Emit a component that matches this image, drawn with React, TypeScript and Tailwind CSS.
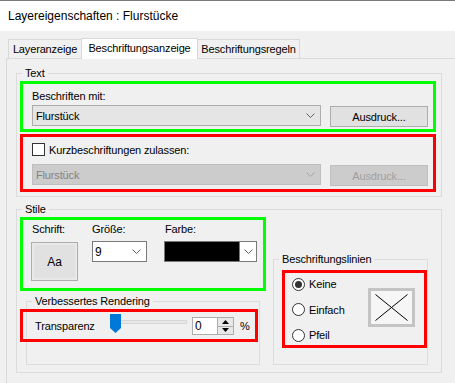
import React from "react";

const Chevron = ({ color = "#606060" }: { color?: string }) => (
  <svg width="9" height="5" viewBox="0 0 9 5" className="shrink-0">
    <path d="M0.5 0.5 L4.5 4.5 L8.5 0.5" fill="none" stroke={color} strokeWidth="1" />
  </svg>
);

function Group({
  label,
  className,
  children,
}: {
  label: string;
  className?: string;
  children?: React.ReactNode;
}) {
  return (
    <div className={`relative border border-[#dcdcdc] ${className ?? ""}`}>
      <span className="absolute left-[5px] -top-[8px] bg-[#f0f0f0] px-[3px] leading-[14px] whitespace-nowrap">
        {label}
      </span>
      {children}
    </div>
  );
}

function Radio({ label, checked }: { label: string; checked?: boolean }) {
  return (
    <div className="flex items-center h-[16px]">
      <div className="w-[13px] h-[13px] rounded-full border border-[#333333] bg-white flex items-center justify-center">
        {checked && <div className="w-[7px] h-[7px] rounded-full bg-[#333333]" />}
      </div>
      <span className="ml-[4px]">{label}</span>
    </div>
  );
}

export default function App() {
  return (
    <div className="w-[455px] h-[383px] overflow-hidden bg-[#f0f0f0] flex flex-col font-['Liberation_Sans',Arial,sans-serif] text-[11px] leading-[14px] text-black tracking-[-0.15px]">
      {/* Title */}
      <div className="h-[31px] shrink-0 border-t border-[#7a7a7a] bg-white pl-[8px] flex items-center text-[12px] tracking-normal">
        Layereigenschaften : Flurstücke
      </div>

      {/* Tabs */}
      <div className="h-[27px] shrink-0 flex items-end pl-[8px]">
        <div className="h-[19px] w-[74px] border border-b-0 border-[#d9d9d9] flex items-center justify-center">
          Layeranzeige
        </div>
        <div className="relative z-10 -ml-[1px] -mb-[1px] h-[21px] w-[117px] border border-b-0 border-[#d9d9d9] bg-white flex items-center justify-center pb-[2px]">
          Beschriftungsanzeige
        </div>
        <div className="-ml-[1px] h-[19px] w-[103px] border border-b-0 border-[#d9d9d9] flex items-center justify-center">
          Beschriftungsregeln
        </div>
      </div>

      {/* Panel */}
      <div className="flex-1 ml-[6px] border-l border-t border-[#d9d9d9] pl-[9px] pt-[14px]">
        {/* Text group */}
        <Group label="Text" className="w-[426px] h-[124px] pl-[3px] pt-[7px]">
          <div className="w-[416px] h-[51px] border-[3px] border-[#00ff00] pl-[9px] pt-[5px]">
            <div className="h-[14px]">Beschriften mit:</div>
            <div className="flex items-start mt-[2px]">
              <div className="w-[289px] h-[21px] bg-[#e5e5e5] border border-[#adadad] flex items-center pl-[3px] pr-[5px]">
                <span className="flex-1">Flurstück</span>
                <Chevron />
              </div>
              <div className="ml-[9px] mt-[1px] w-[98px] h-[21px] bg-[#e1e1e1] border border-[#adadad] flex items-center justify-center">
                Ausdruck...
              </div>
            </div>
          </div>
          <div className="mt-[2px] w-[416px] h-[58px] border-[3px] border-[#ff0000] pl-[9px] pt-[6px]">
            <div className="flex items-center h-[13px]">
              <div className="w-[13px] h-[13px] border border-[#333333] bg-white" />
              <span className="ml-[4px]">Kurzbeschriftungen zulassen:</span>
            </div>
            <div className="flex items-start mt-[8px]">
              <div className="w-[289px] h-[21px] bg-[#cccccc] border border-[#bfbfbf] flex items-center pl-[3px] pr-[5px] text-[#838383]">
                <span className="flex-1">Flurstück</span>
                <Chevron color="#a6a6a6" />
              </div>
              <div className="ml-[9px] mt-[1px] w-[98px] h-[21px] bg-[#cccccc] border border-[#bfbfbf] flex items-center justify-center text-[#a0a0a0]">
                Ausdruck...
              </div>
            </div>
          </div>
        </Group>

        {/* Stile group */}
        <Group label="Stile" className="mt-[12px] w-[426px] h-[164px] flex items-start">
          {/* left column */}
          <div className="pl-[3px] pt-[7px]">
            <div className="w-[246px] h-[74px] border-[3px] border-[#00ff00] flex items-start pl-[8px] pt-[2px]">
              <div className="w-[47px]">
                <div className="h-[14px] pl-[1px]">Schrift:</div>
                <div className="mt-[6px] w-[47px] h-[39px] bg-[#e1e1e1] border border-[#adadad] shadow-[inset_0_0_0_2px_#e9e9e9] flex items-center justify-center text-[12px] tracking-normal">
                  Aa
                </div>
              </div>
              <div className="ml-[14px] w-[55px]">
                <div className="h-[14px]">Größe:</div>
                <div className="mt-[5px] w-[55px] h-[21px] bg-white border border-[#7a7a7a] flex items-center pl-[2px] pr-[5px]">
                  <span className="flex-1 text-[12px]">9</span>
                  <Chevron />
                </div>
              </div>
              <div className="ml-[17px] w-[93px]">
                <div className="h-[14px] pl-[1px]">Farbe:</div>
                <div className="mt-[5px] w-[93px] h-[21px] bg-white border border-[#7a7a7a] flex">
                  <div className="w-[74px] h-full bg-black" />
                  <div className="flex-1 border-l border-[#7a7a7a] flex items-center justify-center">
                    <Chevron />
                  </div>
                </div>
              </div>
            </div>

            <Group label="Verbessertes Rendering" className="ml-[6px] mt-[10px] w-[234px] h-[64px]">
              <div className="-ml-[7px] mt-[7px] w-[238px] h-[33px] border-[3px] border-[#ff0000] flex items-start pl-[12px]">
                <span className="w-[75px] h-[27px] flex items-center">Transparenz</span>
                <div className="relative mt-[2px] w-[77px] h-[19px]">
                  <div className="absolute left-[3px] right-0 top-[6px] h-[4px] bg-[#e7e7e7] border border-[#d6d6d6]" />
                  <svg width="11" height="19" viewBox="0 0 11 19" className="absolute left-0 top-0">
                    <path d="M0 0 H11 V14 L5.5 19 L0 14 Z" fill="#0078d7" />
                  </svg>
                </div>
                <div className="ml-[5px] mt-[5px] w-[42px] h-[18px] bg-white border border-[#adadad] flex">
                  <span className="flex-1 pl-[2px] leading-[16px] text-[12px]">0</span>
                  <div className="w-[16px] h-full border-l border-[#adadad] bg-[#e8e8e8] flex flex-col">
                    <div className="flex-1 flex items-center justify-center border-b border-[#adadad]">
                      <svg width="7" height="4" viewBox="0 0 7 4">
                        <path d="M0 4 L3.5 0 L7 4 Z" fill="#000" />
                      </svg>
                    </div>
                    <div className="flex-1 flex items-center justify-center">
                      <svg width="7" height="4" viewBox="0 0 7 4">
                        <path d="M0 0 L3.5 4 L7 0 Z" fill="#000" />
                      </svg>
                    </div>
                  </div>
                </div>
                <span className="ml-[6px] h-[27px] flex items-center">%</span>
              </div>
            </Group>
          </div>

          {/* right column */}
          <Group label="Beschriftungslinien" className="ml-[7px] mt-[49px] w-[155px] h-[106px]">
            <div className="ml-[8px] mt-[10px] w-[145px] h-[78px] border-[3px] border-[#ff0000] flex items-start">
              <div className="pl-[7px] pt-[3px] flex flex-col gap-[9.5px]">
                <Radio label="Keine" checked />
                <Radio label="Einfach" />
                <Radio label="Pfeil" />
              </div>
              <div className="ml-auto mr-[9px] mt-[15px] w-[47px] h-[39px] border-[3px] border-[#c4c4c4] bg-[#f6f6f6]">
                <svg width="41" height="33" viewBox="0 0 41 33">
                  <path d="M4.5 3.5 L36.5 29.5 M36.5 3.5 L4.5 29.5" stroke="#000" strokeWidth="1" fill="none" />
                </svg>
              </div>
            </div>
          </Group>
        </Group>
      </div>
    </div>
  );
}
